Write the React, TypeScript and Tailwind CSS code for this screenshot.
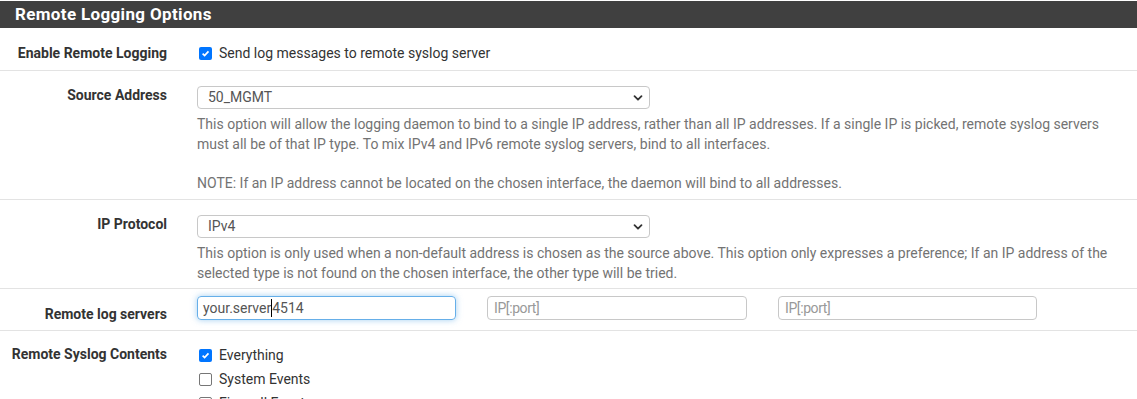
import React from 'react';

const font = { fontFamily: 'Roboto, "Liberation Sans", sans-serif' };

const Row: React.FC<{ label: string; className?: string; labelClass?: string; children: React.ReactNode }> = ({
  label,
  className = '',
  labelClass = '',
  children,
}) => (
  <div className={`flex border-b border-[#e3e3e3] ${className}`}>
    <div className={`w-[182px] shrink-0 pr-[15px] text-right text-[14px] font-bold text-[#333] ${labelClass}`}>{label}</div>
    <div className="flex-1 pl-[15px] pr-[20px]">{children}</div>
  </div>
);

const Chevron = () => (
  <svg width="10" height="10" viewBox="0 0 10 10" className="absolute right-[6px] top-[6px]">
    <path d="M1.5 3.2 L5 6.7 L8.5 3.2" fill="none" stroke="#333" strokeWidth="1.8" strokeLinecap="round" strokeLinejoin="round" />
  </svg>
);

const Select: React.FC<{ value: string }> = ({ value }) => (
  <div className="relative flex h-[23px] w-[453px] items-center rounded-[4px] border border-[#c8c8c8] bg-white pl-[10px] text-[14px] text-[#555]">
    {value}
    <Chevron />
  </div>
);

const Help: React.FC<{ children: React.ReactNode }> = ({ children }) => (
  <div className="text-[14px] leading-[19.5px] text-[#737373]">{children}</div>
);

const Check: React.FC<{ checked?: boolean; label: string }> = ({ checked, label }) => (
  <label className="flex h-[24px] items-center gap-[7px] pl-[2px] text-[14px] text-[#333]">
    {checked ? (
      <span className="flex h-[13px] w-[13px] items-center justify-center rounded-[2px] bg-[#0075ff]">
        <svg width="9" height="9" viewBox="0 0 10 10">
          <path d="M1.8 5.2 L4 7.3 L8.3 2.6" fill="none" stroke="#fff" strokeWidth="1.9" />
        </svg>
      </span>
    ) : (
      <span className="h-[13px] w-[13px] rounded-[2px] border border-[#767676] bg-white" />
    )}
    {label}
  </label>
);

export default function App() {
  return (
    <div className="h-[399px] w-[1137px] overflow-hidden bg-white" style={font}>
      <div className="mt-[1px] flex h-[27px] items-center bg-[#404040] pl-[15px] text-[17px] font-bold tracking-[0.35px] text-white">
        Remote Logging Options
      </div>

      <Row label="Enable Remote Logging" className="h-[43px] items-center pt-[8px]">
        <Check checked label="Send log messages to remote syslog server" />
      </Row>

      <Row label="Source Address" className="h-[129px] pt-[15px]" labelClass="-mt-[1px]">
        <Select value="50_MGMT" />
        <div className="mt-[6px]">
          <Help>
            This option will allow the logging daemon to bind to a single IP address, rather than all IP addresses. If a
            single IP is picked, remote syslog servers must all be of that IP type. To mix IPv4 and IPv6 remote syslog
            servers, bind to all interfaces.
          </Help>
          <div className="h-[20px]" />
          <Help>NOTE: If an IP address cannot be located on the chosen interface, the daemon will bind to all addresses.</Help>
        </div>
      </Row>

      <Row label="IP Protocol" className="h-[89px] pt-[15px]" labelClass="-mt-[1px]">
        <Select value="IPv4" />
        <div className="mt-[6px]">
          <Help>
            This option is only used when a non-default address is chosen as the source above. This option only
            expresses a preference; If an IP address of the selected type is not found on the chosen interface, the
            other type will be tried.
          </Help>
        </div>
      </Row>

      <Row label="Remote log servers" className="h-[42px] pt-[7px]" labelClass="pt-[8px]">
        <div className="flex gap-[31px]">
          <div className="flex h-[24px] w-[259px] items-center rounded-[4px] border border-[#66afe9] pl-[5px] text-[14px] text-[#555] shadow-[0_0_6px_rgba(102,175,233,0.6)]">
            your.server
            <span className="h-[18px] w-[1px] bg-black" />
            4514
          </div>
          <div className="flex h-[24px] w-[260px] items-center rounded-[4px] border border-[#c8c8c8] pl-[6px] text-[14px] tracking-[-0.4px] text-[#999]">
            IP[:port]
          </div>
          <div className="flex h-[24px] w-[259px] items-center rounded-[4px] border border-[#c8c8c8] pl-[6px] text-[14px] tracking-[-0.4px] text-[#999]">
            IP[:port]
          </div>
        </div>
      </Row>

      <Row label="Remote Syslog Contents" className="pt-[12px] border-b-0" labelClass="pt-[1px]">
        <Check checked label="Everything" />
        <Check label="System Events" />
        <Check label="Firewall Events" />
      </Row>
    </div>
  );
}
